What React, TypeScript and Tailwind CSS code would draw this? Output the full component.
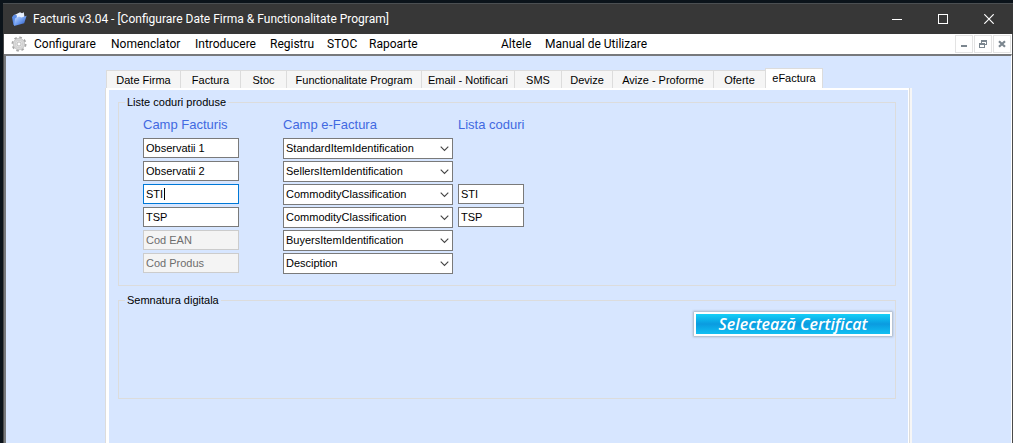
import { useState } from "react"

interface MenuEntry {
  label: string
  width: string
}

interface TabEntry {
  label: string
  width: string
}

interface CodeRow {
  id: number
  field: string
  target: string
  list?: string
  active?: boolean
  disabled?: boolean
}

const menu: MenuEntry[] = [
  { label: "Configurare", width: "w-[77px]" },
  { label: "Nomenclator", width: "w-[84px]" },
  { label: "Introducere", width: "w-[75px]" },
  { label: "Registru", width: "w-[57px]" },
  { label: "STOC", width: "w-[42px]" },
  { label: "Rapoarte", width: "w-[132px]" },
  { label: "Altele", width: "w-11" },
  { label: "Manual de Utilizare", width: "w-[120px]" },
]

const tabs: TabEntry[] = [
  { label: "Date Firma", width: "w-[74px]" },
  { label: "Factura", width: "w-[60px]" },
  { label: "Stoc", width: "w-[46px]" },
  { label: "Functionalitate Program", width: "w-[135px]" },
  { label: "Email - Notificari", width: "w-[93px]" },
  { label: "SMS", width: "w-[47px]" },
  { label: "Devize", width: "w-[51px]" },
  { label: "Avize - Proforme", width: "w-[101px]" },
  { label: "Oferte", width: "w-[52px]" },
  { label: "eFactura", width: "w-[58px]" },
]

const rows: CodeRow[] = [
  { id: 1, field: "Observatii 1", target: "StandardItemIdentification" },
  { id: 2, field: "Observatii 2", target: "SellersItemIdentification" },
  { id: 3, field: "STI", target: "CommodityClassification", list: "STI", active: true },
  { id: 4, field: "TSP", target: "CommodityClassification", list: "TSP" },
  { id: 5, field: "Cod EAN", target: "BuyersItemIdentification", disabled: true },
  { id: 6, field: "Cod Produs", target: "Desciption", disabled: true },
]

const targets = [
  "StandardItemIdentification",
  "SellersItemIdentification",
  "CommodityClassification",
  "BuyersItemIdentification",
  "Desciption",
]

function AppIcon() {
  return (
    <svg width="16" height="16" viewBox="0 0 16 16" aria-hidden="true">
      <defs>
        <linearGradient id="folder" x1="0" y1="0" x2="1" y2="1">
          <stop offset="0" stopColor="#cfe2ff" />
          <stop offset="0.5" stopColor="#6f9df0" />
          <stop offset="1" stopColor="#2350b8" />
        </linearGradient>
      </defs>
      <path d="M2.5 4.5 L9 1.2 L11 2.2 L12.8 1.2 L13.8 8 L4 11z" fill="#e8f0ff" />
      <path d="M1 6 L3.5 3.5 L6 4.5 L4.5 14 L2.5 14z" fill="#5c8ce6" />
      <path d="M4 7.5 L8 5.6 L10.5 6.4 L15.6 4.8 L13.2 12.2 L3 15z" fill="url(#folder)" />
    </svg>
  )
}

function GearIcon() {
  return (
    <svg width="16" height="16" viewBox="0 0 16 16" aria-hidden="true">
      <circle cx="8" cy="8" r="6.6" fill="none" stroke="#a6a6a6" strokeWidth="1.8" strokeDasharray="2.6 2.6" />
      <circle cx="8" cy="8" r="5.7" fill="#d9d9d9" stroke="#b9b9b9" strokeWidth="0.7" />
      <circle cx="8" cy="8" r="3.7" fill="#e6e6e6" stroke="#cccccc" strokeWidth="0.8" />
      <circle cx="8" cy="8" r="2" fill="#ffffff" stroke="#b0b0b0" strokeWidth="0.8" />
    </svg>
  )
}

function TitleBar() {
  return (
    <header className="flex h-[31px] items-center border-t border-[#4b4f52] bg-[#373737] pl-2 pr-px text-white">
      <AppIcon />
      <h1 className="ml-[6px] flex-1 truncate text-xs">
        Facturis v3.04 - [Configurare Date Firma &amp; Functionalitate Program]
      </h1>
      <button aria-label="Minimizare" className="flex h-full w-[46px] items-center justify-center">
        <svg width="10" height="10" shapeRendering="crispEdges">
          <path d="M0 5.5H10" stroke="#fff" />
        </svg>
      </button>
      <button aria-label="Maximizare" className="flex h-full w-[46px] items-center justify-center">
        <svg width="10" height="10" shapeRendering="crispEdges">
          <rect x="0.5" y="0.5" width="9" height="9" fill="none" stroke="#fff" />
        </svg>
      </button>
      <button aria-label="Inchidere" className="flex h-full w-[46px] items-center justify-center">
        <svg width="10" height="10">
          <path d="M0.3 0.3L9.7 9.7M9.7 0.3L0.3 9.7" stroke="#fff" strokeWidth="1.2" />
        </svg>
      </button>
    </header>
  )
}

function MenuBar() {
  return (
    <div className="flex h-5 items-center bg-white pl-[7px] pr-px">
      <GearIcon />
      <nav className="ml-[7px] flex flex-1">
        {menu.map((item) => (
          <button key={item.label} className={`${item.width} whitespace-nowrap text-left text-xs`}>
            {item.label}
          </button>
        ))}
      </nav>
      <div className="flex gap-px">
        <button aria-label="Minimizare fereastra" className="flex size-[18px] items-center justify-center border border-[#e3e3e3]">
          <svg width="8" height="8" shapeRendering="crispEdges">
            <path d="M1 6H7" stroke="#7b868f" strokeWidth="2" />
          </svg>
        </button>
        <button aria-label="Restaurare fereastra" className="flex size-[18px] items-center justify-center border border-[#e3e3e3]">
          <svg width="8" height="8" shapeRendering="crispEdges" fill="#7b868f">
            <path d="M2 0H8V5H6V4H7V2H3V3H2z" />
            <path d="M0 3H6V8H0zM1 5V7H5V5z" fillRule="evenodd" />
          </svg>
        </button>
        <button aria-label="Inchidere fereastra" className="flex size-[18px] items-center justify-center border border-[#e3e3e3]">
          <svg width="8" height="8">
            <path d="M1 1.2L7 6.8M7 1.2L1 6.8" stroke="#7b868f" strokeWidth="2.2" />
          </svg>
        </button>
      </div>
    </div>
  )
}

function TabStrip({ current, onSelect }: { current: string; onSelect: (label: string) => void }) {
  return (
    <div role="tablist" className="flex items-end pl-px">
      {tabs.map((tab) => {
        const selected = tab.label === current
        return (
          <button
            key={tab.label}
            role="tab"
            aria-selected={selected}
            onClick={() => onSelect(tab.label)}
            className={`${tab.width} whitespace-nowrap border-l border-t border-[#dcdcdc] text-center last:border-r ${
              selected ? "h-5 bg-white" : "h-[18px] bg-[#f5f5f5] pt-px"
            }`}
          >
            {tab.label}
          </button>
        )
      })}
    </div>
  )
}

function CodeRowFields({ row }: { row: CodeRow }) {
  const [field, setField] = useState(row.field)
  const [target, setTarget] = useState(row.target)
  const [list, setList] = useState(row.list ?? "")

  return (
    <>
      <div className="relative col-start-1 h-5 w-24">
        <input
          type="text"
          aria-label={`Camp Facturis ${row.id}`}
          value={field}
          disabled={row.disabled}
          onChange={(e) => setField(e.target.value)}
          className={`block h-5 w-full border px-[2px] outline-none ${
            row.active
              ? "border-[#0078d7] bg-white"
              : row.disabled
                ? "border-[#cccccc] bg-[#f4f4f4] text-[#6d6d6d]"
                : "border-[#7a7a7a] bg-white"
          }`}
        />
        {row.active && <span className="absolute left-[21px] top-1 h-3 w-px bg-black" />}
      </div>
      <div className="relative col-start-2 w-[170px]">
        <select
          aria-label={`Camp e-Factura ${row.id}`}
          value={target}
          onChange={(e) => setTarget(e.target.value)}
          className="block h-[21px] w-full appearance-none border border-[#7a7a7a] bg-white px-[2px] outline-none"
        >
          {targets.map((t) => (
            <option key={t}>{t}</option>
          ))}
        </select>
        <svg width="9" height="6" viewBox="0 0 9 6" className="pointer-events-none absolute right-1 top-2" aria-hidden="true">
          <path d="M0.7 0.7L4.5 4.5L8.3 0.7" fill="none" stroke="#444" strokeWidth="1.1" />
        </svg>
      </div>
      {row.list && (
        <input
          type="text"
          aria-label={`Lista coduri ${row.id}`}
          value={list}
          onChange={(e) => setList(e.target.value)}
          className="col-start-3 block h-5 w-[66px] border border-[#7a7a7a] bg-white px-[2px] outline-none"
        />
      )}
    </>
  )
}

export default function App() {
  const [tab, setTab] = useState("eFactura")

  return (
    <div className="flex min-h-screen flex-col bg-[#0b131a] pl-[3px] pt-[3px] font-[Roboto,'Open_Sans',sans-serif] text-black">
      <TitleBar />
      <div className="flex flex-1 flex-col border-x border-[#4a4a4a]">
        <MenuBar />
        <main className="flex flex-1 flex-col border-l-2 border-r border-t-2 border-l-[#77797c] border-r-white border-t-[#77797c] bg-[#d7e6ff] pl-[99px] pr-[101px] pt-3 font-['Liberation_Sans',sans-serif] text-[11px] leading-[13px]">
          <TabStrip current={tab} onSelect={setTab} />
          <div className="flex flex-1 border-x border-[#dcdcdc] shadow-[2px_0_0_#f6f6f6]">
            <div className="flex-1 border-l-[3px] border-r border-t-2 border-white pl-[9px] pr-3 pt-[6px]">
              <fieldset className="h-[190px] border border-[#dcdcdc] pl-6">
                <legend className="-ml-[18px] px-[2px]">Liste coduri produse</legend>
                <div className="mt-2 grid grid-cols-[140px_175px_90px] text-[13px] leading-4 text-[#4169e1]">
                  <span>Camp Facturis</span>
                  <span>Camp e-Factura</span>
                  <span>Lista coduri</span>
                </div>
                <div className="mt-[5px] grid grid-cols-[140px_175px_90px] gap-y-[2px]">
                  {rows.map((row) => (
                    <CodeRowFields key={row.id} row={row} />
                  ))}
                </div>
              </fieldset>
              <fieldset className="mt-2 h-[105px] border border-[#dcdcdc] pl-6 pr-[3px]">
                <legend className="-ml-[18px] px-[2px]">Semnatura digitala</legend>
                <div className="flex justify-end pt-[5px]">
                  <button className="h-6 w-[198px] border-2 border-white bg-linear-to-b from-[#16d0f7] via-[#0b9be0] to-[#12c0f2] font-['Open_Sans','Noto_Sans',sans-serif] text-base leading-5 font-semibold italic text-white shadow-[0_0_2px_1px_#a9b4c2]">
                    Selectează Certificat
                  </button>
                </div>
              </fieldset>
            </div>
          </div>
        </main>
      </div>
    </div>
  )
}
